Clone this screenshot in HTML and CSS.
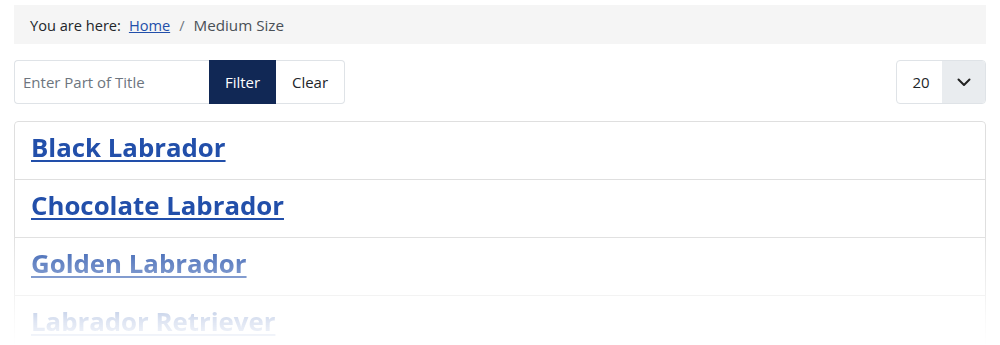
FILE: index.html
```html
<!DOCTYPE html>
<html>
<head>
<meta charset="utf-8">
<link rel="stylesheet" href="styles.css">
</head>
<body>
<nav class="breadcrumb">
  <span class="here">You are here:</span>
  <a href="#" class="crumb-link">Home</a>
  <span class="sep">/</span>
  <span class="current">Medium Size</span>
</nav>
<div class="toolbar">
  <div class="filter-group">
    <input class="filter-input" type="text" placeholder="Enter Part of Title">
    <button class="btn btn-filter">Filter</button>
    <button class="btn btn-clear">Clear</button>
  </div>
  <div class="limit">
    <span class="limit-value">20</span>
    <span class="limit-arrow">
      <svg width="16" height="16" viewBox="0 0 16 16"><path d="M2.5 5.5 L8 11 L13.5 5.5" fill="none" stroke="#222" stroke-width="2" stroke-linecap="round" stroke-linejoin="round"/></svg>
    </span>
  </div>
</div>
<ul class="list">
  <li class="item"><a href="#">Black Labrador</a></li>
  <li class="item"><a href="#">Chocolate Labrador</a></li>
  <li class="item"><a href="#">Golden Labrador</a></li>
  <li class="item"><a href="#">Labrador Retriever</a></li>
</ul>
</body>
</html>
```
FILE: styles.css
```css
* { box-sizing: border-box; }
html, body { margin: 0; padding: 0; background: #fff; }
body {
  padding: 5px 14px 0 14px;
  font-family: "Open Sans", "Noto Sans", sans-serif;
  color: #22262a;
  overflow: hidden;
  height: 345px;
}
.breadcrumb {
  background: #f5f5f5;
  height: 39px;
  display: flex;
  align-items: center;
  padding: 0 16px;
  font-size: 14.6px;
  color: #495057;
}
.here { color: #22262a; margin-right: 8px; }
.crumb-link { color: #224faa; text-decoration: underline; }
.sep { margin: 0 9px 0 9px; color: #6d757e; }
.current { color: #495057; font-size: 15.2px; }
.toolbar {
  display: flex;
  justify-content: space-between;
  margin-top: 16px;
  height: 44px;
}
.filter-group { display: flex; height: 44px; }
.filter-input {
  width: 195px;
  height: 44px;
  border: 1px solid #dfe3e7;
  border-right: none;
  border-radius: 4px 0 0 4px;
  padding: 0 8px;
  font-family: inherit;
  font-size: 15px;
  color: #22262a;
  outline: none;
}
.filter-input::placeholder { color: #6d757e; }
.btn {
  height: 44px;
  font-family: inherit;
  font-size: 15px;
  border: 1px solid #dfe3e7;
  cursor: pointer;
  padding: 0;
}
.btn-filter {
  width: 67px;
  background: #112855;
  border-color: #112855;
  color: #fff;
}
.btn-clear {
  width: 69px;
  background: #fff;
  color: #22262a;
  border-left: none;
  border-radius: 0 4px 4px 0;
}
.limit {
  display: flex;
  width: 90px;
  height: 44px;
  border: 1px solid #dfe3e7;
  border-radius: 4px;
  overflow: hidden;
}
.limit-value {
  width: 45px;
  display: flex;
  align-items: center;
  justify-content: center;
  padding-left: 3px;
  font-size: 15px;
  color: #22262a;
}
.limit-arrow {
  flex: 1;
  background: #e9ecef;
  display: flex;
  align-items: center;
  justify-content: center;
}
.list {
  list-style: none;
  margin: 17px 0 0 0;
  padding: 0;
  border: 1px solid #dfdfdf;
  border-radius: 4px;
  -webkit-mask-image: linear-gradient(to bottom, #000 0px, #000 110px, rgba(0,0,0,0.15) 200px, rgba(0,0,0,0) 225px);
  mask-image: linear-gradient(to bottom, #000 0px, #000 110px, rgba(0,0,0,0.15) 200px, rgba(0,0,0,0) 225px);
}
.item {
  height: 58px;
  border-top: 1px solid #dfdfdf;
  display: flex;
  align-items: center;
  padding: 0 16px 6px 16px;
}
.item:first-child { border-top: none; height: 57px; }
.item a {
  color: #224faa;
  font-weight: 700;
  font-size: 25.8px;
  line-height: 1.2;
  text-decoration: underline;
  text-decoration-thickness: 2px;
  text-underline-offset: 3px;
}
```
